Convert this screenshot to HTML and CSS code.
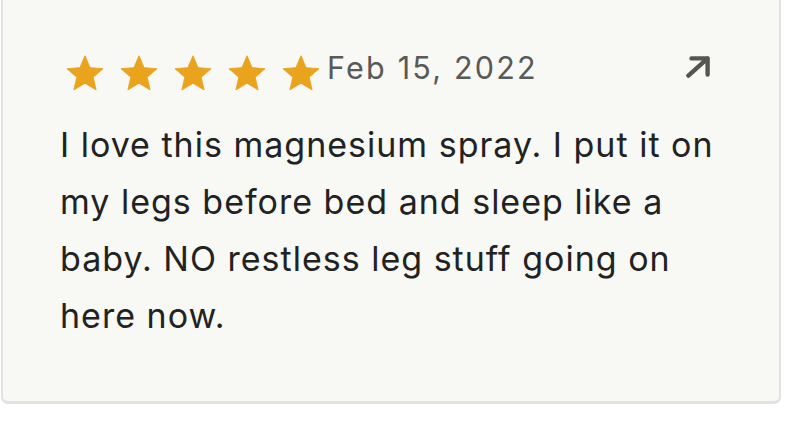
FILE: index.html
```html
<!DOCTYPE html>
<html>
<head>
<meta charset="utf-8">
<link rel="stylesheet" href="styles.css">
</head>
<body>
<div class="card">
  <div class="head">
    <div class="stars">
      <svg class="star" viewBox="2 1.6 20 20"><path d="M12 17.27L18.18 21l-1.64-7.03L22 9.24l-7.19-.61L12 2 9.19 8.63 2 9.24l5.46 4.73L5.82 21z" stroke="#eaa31c" stroke-width="0.5" stroke-linejoin="round"/></svg>
      <svg class="star" viewBox="2 1.6 20 20"><path d="M12 17.27L18.18 21l-1.64-7.03L22 9.24l-7.19-.61L12 2 9.19 8.63 2 9.24l5.46 4.73L5.82 21z" stroke="#eaa31c" stroke-width="0.5" stroke-linejoin="round"/></svg>
      <svg class="star" viewBox="2 1.6 20 20"><path d="M12 17.27L18.18 21l-1.64-7.03L22 9.24l-7.19-.61L12 2 9.19 8.63 2 9.24l5.46 4.73L5.82 21z" stroke="#eaa31c" stroke-width="0.5" stroke-linejoin="round"/></svg>
      <svg class="star" viewBox="2 1.6 20 20"><path d="M12 17.27L18.18 21l-1.64-7.03L22 9.24l-7.19-.61L12 2 9.19 8.63 2 9.24l5.46 4.73L5.82 21z" stroke="#eaa31c" stroke-width="0.5" stroke-linejoin="round"/></svg>
      <svg class="star" viewBox="2 1.6 20 20"><path d="M12 17.27L18.18 21l-1.64-7.03L22 9.24l-7.19-.61L12 2 9.19 8.63 2 9.24l5.46 4.73L5.82 21z" stroke="#eaa31c" stroke-width="0.5" stroke-linejoin="round"/></svg>
    </div>
    <span class="date">Feb 15, 2022</span>
    <svg class="arrow" viewBox="0 0 24 22"><path d="M2.4 19.6L21.6 2.4M5.5 2.4H21.6V18.5" fill="none" stroke="currentColor" stroke-width="4.4" stroke-linecap="round" stroke-linejoin="round"/></svg>
  </div>
  <p class="text">I love this magnesium spray. I put it on my legs before bed and sleep like a baby. NO restless leg stuff going on here now.</p>
</div>
</body>
</html>
```
FILE: styles.css
```css
html, body {
  margin: 0;
  padding: 0;
  background: #ffffff;
}
body {
  font-family: "Inter", "Liberation Sans", sans-serif;
  width: 785px;
  height: 421px;
  overflow: hidden;
}
.card {
  margin: -20px 0 0 1px;
  width: 780px;
  height: 424px;
  box-sizing: border-box;
  background: #f8f8f4;
  border: 2px solid #e2e2e0;
  border-bottom-width: 3px;
  border-radius: 7px;
  padding: 73px 69px 0 57px;
}
.head {
  display: flex;
  align-items: flex-start;
}
.stars {
  display: flex;
  gap: 18px;
  margin-left: 7px;
}
.star {
  width: 36px;
  height: 36px;
  fill: #eaa31c;
}
.date {
  margin: -2px 0 0 8px;
  font-size: 30.5px;
  line-height: 30.5px;
  color: #595959;
  letter-spacing: 2.2px;
}
.arrow {
  width: 24px;
  height: 22px;
  color: #555555;
  margin: 1px 0 0 auto;
}
.text {
  margin: 25px 0 0 0;
  width: 680px;
  font-size: 34px;
  line-height: 57px;
  letter-spacing: 1px;
  color: #222222;
}
```
